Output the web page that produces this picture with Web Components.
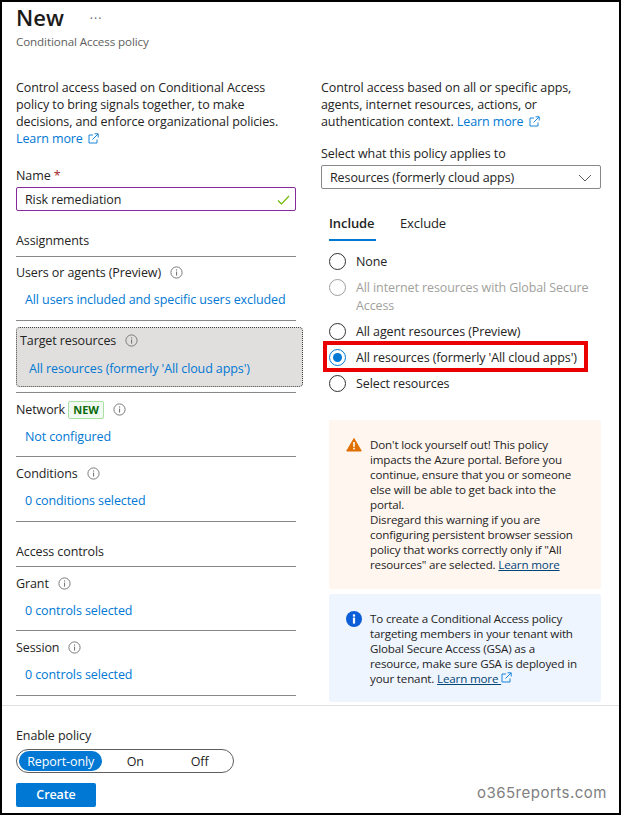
<!DOCTYPE html>
<html>
<head>
<meta charset="utf-8">
<style>
    html, body { margin: 0; padding: 0; background: #fff; }
    body { font-family: 'Open Sans', 'Noto Sans', sans-serif; font-size: 12.5px; letter-spacing: -.1px; color: #242424; }
</style>
</head>
<body>
<policy-page></policy-page>
<script>
const INFO_ICON = `<svg width="13" height="13" viewBox="0 0 13 13"><circle cx="6.5" cy="6.5" r="5.6" fill="none" stroke="#7a7a7a"/><rect x="6" y="5.6" width="1.1" height="4" fill="#7a7a7a"/><rect x="6" y="3.4" width="1.1" height="1.2" fill="#7a7a7a"/></svg>`;
const EXTERNAL_ICON = `<svg width="11" height="11" viewBox="0 0 11 11" fill="none" stroke="#0078d4" stroke-width="0.9"><path d="M5 2H1v8h8V6.5"/><path d="M4.5 6.5L10 1M6.5 .8H10.2V4.5"/></svg>`;

// Section row in the left column: label, optional badge, info icon, blue value
class PolicyRow extends HTMLElement {
    constructor() {
        super();
        this.attachShadow({ mode: 'open' });
        this.shadowRoot.innerHTML = `
            <style>
                :host { display: block; border-bottom: 1px solid #8a8886; width: 280px; height: 64px; box-sizing: border-box; }
                :host([tall]) { height: 65px; }
                :host([active]) { height: 72px; padding-top: 6px; }
                .label { display: flex; align-items: center; gap: 9px; height: 17px; padding-top: 7px; }
                :host([low]) .label { padding-top: 8px; }
                .value { color: #0078d4; padding: 10px 0 0 9px; line-height: 17px; }
                :host([active]) .box { border: 1px dotted #444; border-radius: 4px; background: #e1dfdd; width: 287px; height: 60px; box-sizing: border-box; }
                :host([active]) .label { padding: 4px 0 0 3px; }
                :host([active]) .value { padding: 11px 0 0 12px; }
                svg { display: block; }
            </style>
            <div class="box">
                <div class="label"><span><slot></slot></span>${INFO_ICON}</div>
                <div class="value">${this.getAttribute('value')}</div>
            </div>
        `;
    }
}

class PolicyHeading extends HTMLElement {
    constructor() {
        super();
        this.attachShadow({ mode: 'open' });
        this.shadowRoot.innerHTML = `
            <style>
                :host { display: block; width: 280px; border-bottom: 1px solid #8a8886; box-sizing: border-box; line-height: 17px; padding-bottom: 7px; }
            </style>
            <slot></slot>
        `;
    }
}

class PolicyRadio extends HTMLElement {
    constructor() {
        super();
        this.attachShadow({ mode: 'open' });
        this.shadowRoot.innerHTML = `
            <style>
                :host { display: flex; gap: 10px; align-items: flex-start; line-height: 18px; padding: 0 0 8px; }
                :host([disabled]) { color: #a19f9d; }
                .dot { width: 17px; height: 17px; border: 1.5px solid #323130; border-radius: 50%; box-sizing: border-box; flex: none; display: flex; align-items: center; justify-content: center; }
                :host([disabled]) .dot { border-color: #a19f9d; }
                :host([checked]) .dot { border-color: #0078d4; border-width: 1px; }
                :host([checked]) .dot::after { content: ''; width: 9px; height: 9px; border-radius: 50%; background: #0078d4; }
            </style>
            <span class="dot"></span><span><slot></slot></span>
        `;
    }
}

class PolicyNotice extends HTMLElement {
    constructor() {
        super();
        this.attachShadow({ mode: 'open' });
        this.shadowRoot.innerHTML = `
            <style>
                :host { display: flex; gap: 8px; border-radius: 2px; font-size: 11.6px; letter-spacing: -.16px; line-height: 15px; padding: 17px 16px 16px 17px; width: 272px; box-sizing: border-box; }
                :host([kind=warning]) { background: #fff6f0; padding-bottom: 17px; }
                :host([kind=info]) { background: #eff5fe; }
                svg { display: block; flex: none; }
            </style>
            ${this.getAttribute('kind') === 'warning'
                ? `<svg width="16" height="16" viewBox="0 0 16 16"><path d="M8 1.5L15.3 14H.7z" fill="#e07000" stroke="#e07000" stroke-linejoin="round"/><rect x="7.2" y="5" width="1.6" height="4.8" fill="#fff"/><rect x="7.2" y="10.8" width="1.6" height="1.6" fill="#fff"/></svg>`
                : `<svg width="16" height="16" viewBox="0 0 16 16"><circle cx="8" cy="8" r="8" fill="#0b5ed7"/><rect x="6.9" y="6.6" width="2.2" height="6" fill="#fff"/><rect x="6.9" y="3.4" width="2.2" height="2.2" fill="#fff"/></svg>`}
            <div><slot></slot></div>
        `;
    }
}

class NewBadge extends HTMLElement {
    constructor() {
        super();
        this.attachShadow({ mode: 'open' });
        this.shadowRoot.innerHTML = `
            <style>
                :host { display: inline-block; border: 1px solid #a9dfa5; border-radius: 2px; background: #f1faf1; color: #0b6a0b; font-size: 11px; font-weight: 700; letter-spacing: 0; line-height: 16px; padding: 0 4px; }
            </style>
            <slot></slot>
        `;
    }
}

class PolicyPage extends HTMLElement {
    constructor() {
        super();
        this.attachShadow({ mode: 'open' });
        this.shadowRoot.innerHTML = `
            <style>
                :host { display: block; width: 621px; height: 815px; box-sizing: border-box; border: 2px solid #000; position: relative; overflow: hidden; background: #fff; }
                a { color: #0078d4; text-decoration: none; }
                a svg { vertical-align: -1px; margin-left: 2px; }
                .head { padding: 0 14px; height: 70px; }
                .title { display: flex; align-items: center; gap: 26px; height: 30px; font-size: 22px; font-weight: 600; letter-spacing: 0; color: #1b1a19; }
                .dots { font-size: 12px; font-weight: 400; letter-spacing: 1px; color: #605e5c; margin-top: 3px; }
                .sub { font-size: 11.6px; color: #605e5c; line-height: 16px; margin-top: 2px; }
                .cols { display: flex; height: 633px; border-bottom: 1px solid #e1dfdd; }
                .left { width: 305px; padding-left: 14px; box-sizing: border-box; flex: none; }
                .right { padding-left: 14px; flex: 1; }
                .para { line-height: 17px; padding-top: 7px; }
                .fieldlabel { line-height: 17px; }
                .name { margin-top: 20px; }
                .req { color: #a4262c; }
                .input { width: 280px; height: 24px; box-sizing: border-box; border: 1px solid #86289e; border-radius: 2px; margin-top: 3px; padding: 1px 5px 0 8px; line-height: 22px; display: flex; justify-content: space-between; align-items: center; }
                .section { margin-top: 21px; }
                .select { width: 280px; height: 24px; box-sizing: border-box; border: 1px solid #8a8886; border-radius: 2px; margin-top: 3px; padding: 1px 8px 0; line-height: 22px; display: flex; justify-content: space-between; align-items: center; }
                .tabs { display: flex; gap: 24px; margin: 26px 0 0 8px; line-height: 17px; font-size: 13px; }
                .tab { padding-bottom: 7px; }
                .tab.on { font-weight: 600; min-width: 47px; border-bottom: 2px solid #0078d4; }
                .radios { margin: 12px 0 0 8px; position: relative; }
                .redbox { position: absolute; left: -6px; top: 88px; width: 257px; height: 23px; border: 4px solid #ea0000; }
                .notices { margin-left: 8px; display: flex; flex-direction: column; gap: 5px; margin-top: 19px; }
                .notices a { color: #004578; text-decoration: underline; }
                .foot { padding: 21px 14px 0; }
                .toggle { display: flex; width: 218px; height: 24px; box-sizing: border-box; border: 1px solid #605e5c; border-radius: 12px; padding: 1px 2px; margin-top: 5px; }
                .toggle span { text-align: center; line-height: 21px; }
                .toggle .sel { width: 85px; background: #0078d4; color: #fff; border-radius: 10px; }
                .toggle .on-opt { width: 67px; }
                .toggle .off-opt { width: 64px; }
                .create { width: 80px; height: 24px; background: #0078d4; color: #fff; font-weight: 600; text-align: center; line-height: 24px; border-radius: 2px; margin-top: 10px; }
                .mark { position: absolute; right: 12px; bottom: 11px; font-family: Inter, sans-serif; font-size: 15px; color: #808080; letter-spacing: .5px; }
                svg { flex: none; }
            </style>
            <div class="head">
                <div class="title"><span>New</span><span class="dots">···</span></div>
                <div class="sub">Conditional Access policy</div>
            </div>
            <div class="cols">
                <div class="left">
                    <div class="para">Control access based on Conditional Access<br>policy to bring signals together, to make<br>decisions, and enforce organizational policies.<br><a>Learn more ${EXTERNAL_ICON}</a></div>
                    <div class="fieldlabel name">Name <span class="req">*</span></div>
                    <div class="input"><span>Risk remediation</span><svg width="13" height="10" viewBox="0 0 13 10" fill="none" stroke="#6bb700" stroke-width="1.1"><path d="M1 5.5L4.5 9L12 1"/></svg></div>
                    <policy-heading class="section">Assignments</policy-heading>
                    <policy-row value="All users included and specific users excluded">Users or agents (Preview)</policy-row>
                    <policy-row active value="All resources (formerly 'All cloud apps')">Target resources</policy-row>
                    <policy-row low value="Not configured">Network <new-badge>NEW</new-badge></policy-row>
                    <policy-row low tall value="0 conditions selected">Conditions</policy-row>
                    <policy-heading class="section" style="padding-bottom:6px">Access controls</policy-heading>
                    <policy-row low value="0 controls selected">Grant</policy-row>
                    <policy-row low tall value="0 controls selected">Session</policy-row>
                </div>
                <div class="right">
                    <div class="para">Control access based on all or specific apps,<br>agents, internet resources, actions, or<br>authentication context. <a>Learn more ${EXTERNAL_ICON}</a></div>
                    <div class="fieldlabel" style="margin-top:15px">Select what this policy applies to</div>
                    <div class="select"><span>Resources (formerly cloud apps)</span><svg width="14" height="8" viewBox="0 0 14 8" fill="none" stroke="#605e5c"><path d="M1 1l6 6 6-6"/></svg></div>
                    <div class="tabs"><span class="tab on">Include</span><span class="tab">Exclude</span></div>
                    <div class="radios">
                        <policy-radio>None</policy-radio>
                        <policy-radio disabled>All internet resources with Global Secure<br>Access</policy-radio>
                        <policy-radio>All agent resources (Preview)</policy-radio>
                        <policy-radio checked>All resources (formerly 'All cloud apps')</policy-radio>
                        <policy-radio>Select resources</policy-radio>
                        <div class="redbox"></div>
                    </div>
                    <div class="notices">
                        <policy-notice kind="warning">Don't lock yourself out! This policy<br>impacts the Azure portal. Before you<br>continue, ensure that you or someone<br>else will be able to get back into the<br>portal.<br>Disregard this warning if you are<br>configuring persistent browser session<br>policy that works correctly only if "All<br>resources" are selected. <a>Learn more</a></policy-notice>
                        <policy-notice kind="info">To create a Conditional Access policy<br>targeting members in your tenant with<br>Global Secure Access (GSA) as a<br>resource, make sure GSA is deployed in<br>your tenant. <a>Learn more </a>${EXTERNAL_ICON}</policy-notice>
                    </div>
                </div>
            </div>
            <div class="foot">
                <div class="fieldlabel">Enable policy</div>
                <div class="toggle"><span class="sel">Report-only</span><span class="on-opt">On</span><span class="off-opt">Off</span></div>
                <div class="create">Create</div>
            </div>
            <div class="mark">o365reports.com</div>
        `;
    }
}

customElements.define('policy-row', PolicyRow);
customElements.define('policy-heading', PolicyHeading);
customElements.define('policy-radio', PolicyRadio);
customElements.define('policy-notice', PolicyNotice);
customElements.define('new-badge', NewBadge);
customElements.define('policy-page', PolicyPage);
</script>
</body>
</html>
